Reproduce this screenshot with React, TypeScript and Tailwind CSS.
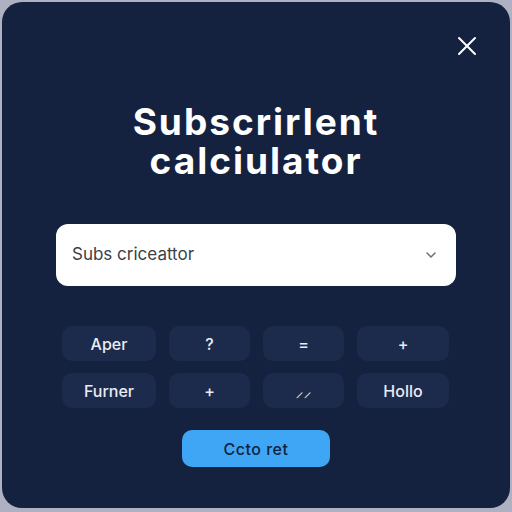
import React from 'react';

const keys = ['Aper', '?', '=', '+', 'Furner', '+', '⸝⸝', 'Hollo'];

const App: React.FC = () => {
  return (
    <div className="w-[512px] h-[512px] bg-[#aeb1c2] p-[2px] pb-[4px]" style={{ fontFamily: 'Inter, "Noto Sans", sans-serif' }}>
      <div className="relative h-full w-full rounded-[20px] bg-[#15223f] flex flex-col items-center">
        {/* close */}
        <button className="absolute right-[32px] top-[33px] text-white">
          <svg width="22" height="22" viewBox="0 0 22 22" fill="none" stroke="currentColor" strokeWidth="2" strokeLinecap="round">
            <path d="M3 3L19 19M19 3L3 19" />
          </svg>
        </button>

        <h1 className="mt-[100px] text-center text-white font-bold text-[37px] leading-[39px] tracking-[2px]">
          Subscrirlent
          <br />
          calciulator
        </h1>

        {/* plan select */}
        <div className="mt-[44px] w-[400px] h-[62px] rounded-[12px] bg-white flex items-center justify-between pl-[16px] pr-[20px]">
          <span className="text-[17px] text-[#3a3f4a]">Subs criceattor</span>
          <svg width="10" height="6" viewBox="0 0 10 6" fill="none" stroke="#6b7280" strokeWidth="1.5" strokeLinecap="round">
            <path d="M1 1L5 5L9 1" />
          </svg>
        </div>

        {/* keypad */}
        <div className="mt-[40px] grid grid-cols-[94px_81px_81px_92px] gap-x-[13px] gap-y-[12px] ml-[-1px]">
          {keys.map((k, i) => (
            <button
              key={i}
              className="h-[35px] rounded-[10px] bg-[#1c2b4b] text-[#e8ecf4] text-[16px] font-medium flex items-center justify-center"
            >
              {k}
            </button>
          ))}
        </div>

        <button className="mt-[22px] w-[148px] h-[37px] rounded-[10px] bg-[#3ea6f5] text-[#13233f] text-[16px] font-medium tracking-[0.5px]">
          Ccto ret
        </button>
      </div>
    </div>
  );
};

export default App;
